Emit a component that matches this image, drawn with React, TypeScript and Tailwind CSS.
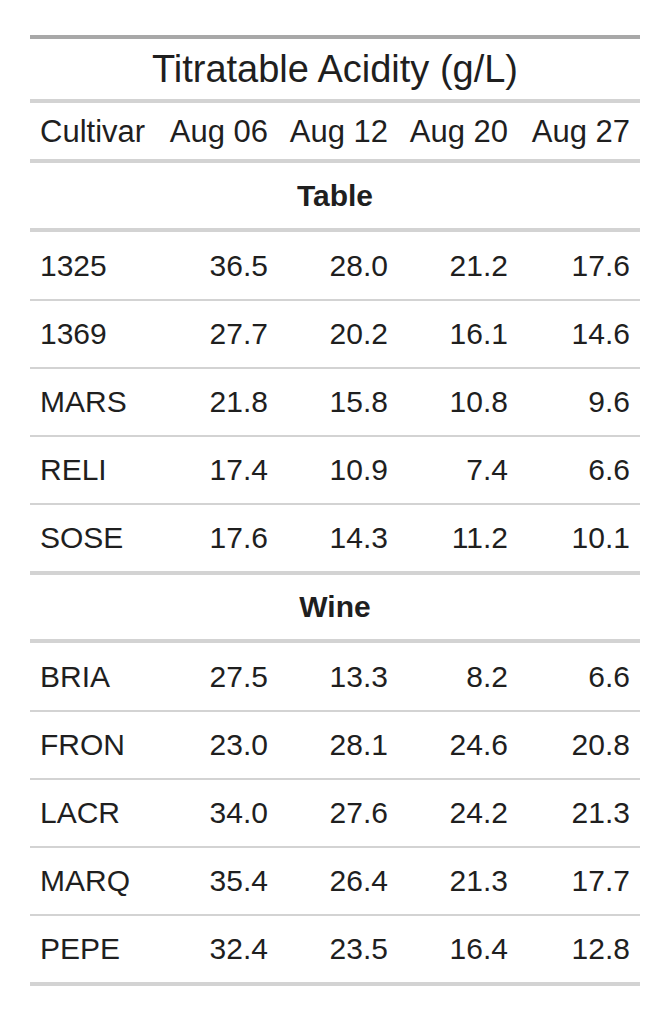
type Row = { name: string; values: string[] };

const groups: { label: string; rows: Row[] }[] = [
  {
    label: "Table",
    rows: [
      { name: "1325", values: ["36.5", "28.0", "21.2", "17.6"] },
      { name: "1369", values: ["27.7", "20.2", "16.1", "14.6"] },
      { name: "MARS", values: ["21.8", "15.8", "10.8", "9.6"] },
      { name: "RELI", values: ["17.4", "10.9", "7.4", "6.6"] },
      { name: "SOSE", values: ["17.6", "14.3", "11.2", "10.1"] },
    ],
  },
  {
    label: "Wine",
    rows: [
      { name: "BRIA", values: ["27.5", "13.3", "8.2", "6.6"] },
      { name: "FRON", values: ["23.0", "28.1", "24.6", "20.8"] },
      { name: "LACR", values: ["34.0", "27.6", "24.2", "21.3"] },
      { name: "MARQ", values: ["35.4", "26.4", "21.3", "17.7"] },
      { name: "PEPE", values: ["32.4", "23.5", "16.4", "12.8"] },
    ],
  },
];

const dates = ["Aug 06", "Aug 12", "Aug 20", "Aug 27"];

const cols = "grid grid-cols-[128px_120px_120px_120px_122px] items-center";

function DataRow({ row, first }: { row: Row; first: boolean }) {
  return (
    <div
      className={
        first
          ? `${cols} h-[67px]`
          : `${cols} h-[68px] border-t-2 border-t-[#d3d3d3]`
      }
    >
      <div className="pl-[10px]">{row.name}</div>
      {row.values.map((v, i) => (
        <div key={i} className="pr-[10px] text-right tabular-nums">
          {v}
        </div>
      ))}
    </div>
  );
}

export default function App() {
  return (
    <div className="min-h-screen bg-white pt-[35px] pl-[30px]">
      <div className="w-[610px] border-t-4 border-b-4 border-t-[#a8a8a8] border-b-[#d3d3d3] font-['Liberation_Sans',Arial,sans-serif] text-[30px] leading-none text-[#1f1f1f]">
        <div className="flex h-[64px] items-center justify-center border-b-4 border-b-[#d3d3d3] text-[38px]">
          Titratable Acidity (g/L)
        </div>
        <div className={`${cols} h-[60px] border-b-4 border-b-[#d3d3d3] text-[31px]`}>
          <div className="pl-[10px]">Cultivar</div>
          {dates.map((d) => (
            <div key={d} className="pr-[10px] text-right">
              {d}
            </div>
          ))}
        </div>
        {groups.map((g, gi) => (
          <div key={g.label}>
            <div
              className={
                gi === 0
                  ? "flex h-[69px] items-center justify-center border-b-4 border-b-[#d3d3d3] font-bold"
                  : "flex h-[72px] items-center justify-center border-y-4 border-y-[#d3d3d3] font-bold"
              }
            >
              {g.label}
            </div>
            {g.rows.map((r, i) => (
              <DataRow key={r.name} row={r} first={i === 0} />
            ))}
          </div>
        ))}
      </div>
    </div>
  );
}
